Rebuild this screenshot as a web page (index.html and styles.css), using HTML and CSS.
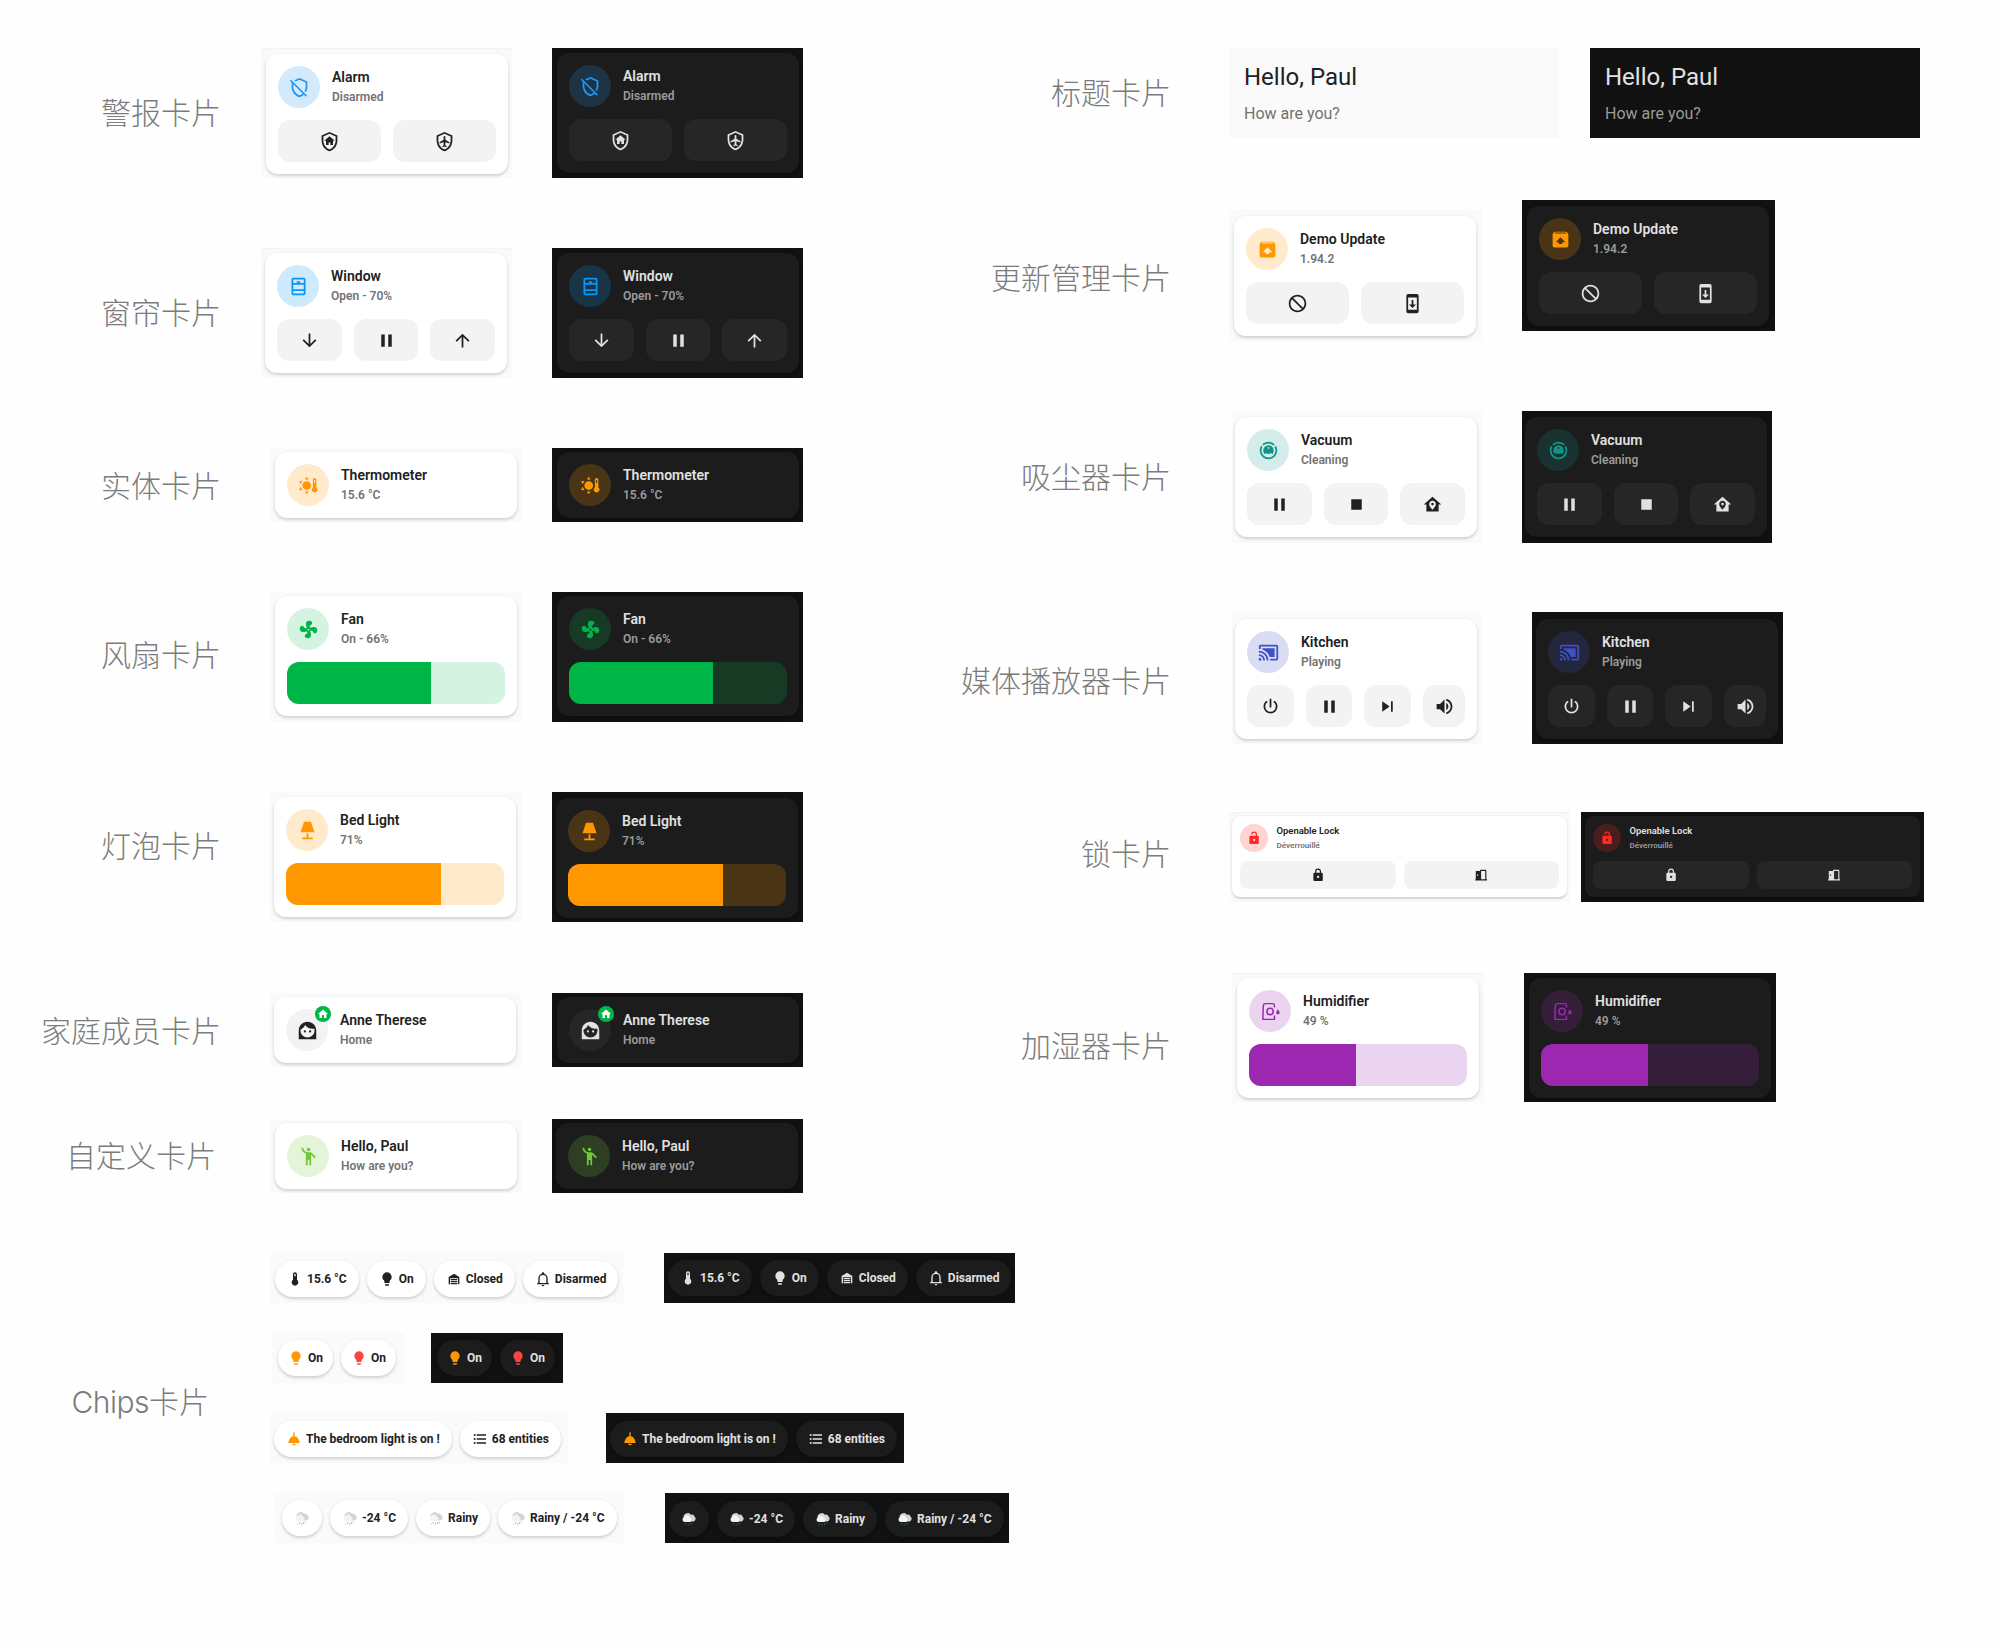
FILE: index.html
```html
<!DOCTYPE html>
<html lang="zh-CN">
<head>
<meta charset="utf-8">
<title>Mushroom Cards</title>
<link rel="stylesheet" href="styles.css">
</head>
<body>
<svg class="sprite" aria-hidden="true">
  <symbol id="shield-off" viewBox="0 0 24 24"><path d="M1,4.27L2.28,3L20.5,21.22L19.23,22.5L17,20.25C15.57,21.57 13.87,22.54 12,23C6.84,21.74 3,16.55 3,11V6.27L1,4.27M12,20.92C13.28,20.6 14.5,19.85 15.58,18.83L5,8.25V11.22C5,15.54 8.25,20 12,20.92M12,1L21,5V11C21,13.28 20.35,15.5 19.23,17.43L17.75,15.94C18.55,14.5 19,12.87 19,11.22V6.3L12,3.18L7.5,5.18L6,3.68L12,1Z"/></symbol>
  <symbol id="shield-home" viewBox="0 0 24 24"><path d="M11,13H13V16H16V11H18L12,6L6,11H8V16H11V13M12,1L21,5V11C21,16.55 17.16,21.74 12,23C6.84,21.74 3,16.55 3,11V5L12,1M12,3.18L5,6.3V11.22C5,15.54 8.25,20 12,21C15.75,20 19,15.54 19,11.22V6.3L12,3.18Z"/></symbol>
  <symbol id="shield-plane" viewBox="0 0 24 24"><path d="M12,1L21,5V11C21,16.55 17.16,21.74 12,23C6.84,21.74 3,16.55 3,11V5L12,1M12,3.18L5,6.3V11.22C5,15.54 8.25,20 12,21C15.75,20 19,15.54 19,11.22V6.3L12,3.18M12,5.7A1,1 0 0 0 11,6.7V10L6.3,12.8V14.2L11,12.8V16.3L9.6,17.4V18.5L12,17.8L14.4,18.5V17.4L13,16.3V12.8L17.7,14.2V12.8L13,10V6.7A1,1 0 0 0 12,5.7Z"/></symbol>
  <symbol id="window" viewBox="0 0 24 24"><path d="M6,8H10V6H14V8H18V4H6V8M18,10H6V15H18V10M6,20H18V17H6V20M6,2H18A2,2 0 0,1 20,4V20A2,2 0 0,1 18,22H6A2,2 0 0,1 4,20V4A2,2 0 0,1 6,2Z"/></symbol>
  <symbol id="down" viewBox="0 0 24 24"><path d="M11,4H13V16L18.5,10.5L19.92,11.92L12,19.84L4.08,11.92L5.5,10.5L11,16V4Z"/></symbol>
  <symbol id="up" viewBox="0 0 24 24"><path d="M13,20H11V8L5.5,13.5L4.08,12.08L12,4.16L19.92,12.08L18.5,13.5L13,8V20Z"/></symbol>
  <symbol id="pause" viewBox="0 0 24 24"><path d="M14,19H18V5H14M6,19H10V5H6V19Z"/></symbol>
  <symbol id="sun-thermo" viewBox="0 0 24 24"><circle cx="10" cy="12" r="5"/><path d="M10,2L12.2,5.2H7.8ZM10,22L7.8,18.8H12.2ZM1.3,7L5.2,6.7L3,10.6ZM1.3,17L3,13.4L5.2,17.3ZM17,5.5A2,2 0 0 1 21,5.5V14.2A3.2,3.2 0 1 1 17,14.2ZM18.4,6V9H19.6V6A.6,.6 0 0 0 18.4,6Z"/></symbol>
  <symbol id="fan" viewBox="0 0 24 24"><path d="M12,11A1,1 0 0,0 11,12A1,1 0 0,0 12,13A1,1 0 0,0 13,12A1,1 0 0,0 12,11M12.5,2C17,2 17.11,5.57 14.75,6.75C13.76,7.24 13.32,8.29 13.13,9.22C13.61,9.42 14.03,9.73 14.35,10.13C18.05,8.13 22.03,8.92 22.03,12.5C22.03,17 18.46,17.1 17.28,14.73C16.78,13.74 15.72,13.3 14.79,13.11C14.59,13.59 14.28,14 13.88,14.34C15.87,18.03 15.08,22 11.5,22C7,22 6.91,18.42 9.27,17.24C10.25,16.75 10.69,15.71 10.89,14.79C10.4,14.59 9.97,14.27 9.65,13.87C5.96,15.85 2,15.07 2,11.5C2,7 5.56,6.89 6.74,9.26C7.24,10.25 8.29,10.68 9.22,10.87C9.41,10.39 9.73,9.97 10.14,9.65C8.15,5.96 8.94,2 12.5,2Z"/></symbol>
  <symbol id="lamp" viewBox="0 0 24 24"><path d="M8,2H16L20,14H4L8,2M11,15H13V20H18V22H6V20H11V15Z"/></symbol>
  <symbol id="woman" viewBox="0 0 24 24"><path d="M13.75,13C13.75,12.31 14.31,11.75 15,11.75C15.69,11.75 16.25,12.31 16.25,13C16.25,13.69 15.69,14.25 15,14.25C14.31,14.25 13.75,13.69 13.75,13M22,12V22H2V12C2,6.5 6.5,2 12,2C17.5,2 22,6.5 22,12M4,12C4,16.41 7.59,20 12,20C16.41,20 20,16.41 20,12C20,11.21 19.88,10.45 19.67,9.74C18.95,9.91 18.2,10 17.42,10C14.05,10 11.07,8.33 9.26,5.77C8.28,8.16 6.41,10.09 4.05,11.14C4,11.42 4,11.71 4,12M9,11.75A1.25,1.25 0 0,0 7.75,13A1.25,1.25 0 0,0 9,14.25A1.25,1.25 0 0,0 10.25,13A1.25,1.25 0 0,0 9,11.75Z"/></symbol>
  <symbol id="home" viewBox="0 0 24 24"><path d="M10,20V14H14V20H19V12H22L12,3L2,12H5V20H10Z"/></symbol>
  <symbol id="greeting" viewBox="0 0 24 24"><circle cx="12" cy="4" r="2"/><path d="M15.9,8.1C15.5,7.7 14.8,7 13.5,7H11C8.2,7 6,4.8 6,2H4C4,5.2 6.1,7.8 9,8.7V22H11V16H13V22H15V10.1L19,14L20.4,12.6Z"/></symbol>
  <symbol id="thermometer" viewBox="0 0 24 24"><path d="M15,13V5A3,3 0 0,0 9,5V13A5,5 0 1,0 15,13M12,4A1,1 0 0,1 13,5V8H11V5A1,1 0 0,1 12,4Z"/></symbol>
  <symbol id="bulb" viewBox="0 0 24 24"><path d="M12,2A7,7 0 0,0 5,9C5,11.38 6.19,13.47 8,14.74V17A1,1 0 0,0 9,18H15A1,1 0 0,0 16,17V14.74C17.81,13.47 19,11.38 19,9A7,7 0 0,0 12,2M9,21A1,1 0 0,0 10,22H14A1,1 0 0,0 15,21V20H9V21Z"/></symbol>
  <symbol id="garage" viewBox="0 0 24 24"><path d="M20 9V20H18V11H6V20H4V9L12 4L20 9M17 12H7V14H17V12M17 18H7V20H17V18M17 15H7V17H17V15Z"/></symbol>
  <symbol id="bell" viewBox="0 0 24 24"><path d="M10,21H14A2,2 0 0,1 12,23A2,2 0 0,1 10,21M21,19V20H3V19L5,17V11C5,7.9 7.03,5.17 10,4.29C10,4.19 10,4.1 10,4A2,2 0 0,1 12,2A2,2 0 0,1 14,4C14,4.1 14,4.19 14,4.29C16.97,5.17 19,7.9 19,11V17L21,19M17,11A5,5 0 0,0 12,6A5,5 0 0,0 7,11V18H17V11Z"/></symbol>
  <symbol id="ceiling" viewBox="0 0 24 24"><path d="M11,2H13V8C17,8.4 19.6,12 20.6,18H3.4C4.4,12 7,8.4 11,8ZM9.3,19H14.7A2.7,2.3 0 0 1 9.3,19Z"/></symbol>
  <symbol id="list" viewBox="0 0 24 24"><path d="M7,5H21V7H7V5M7,13V11H21V13H7M4,4.5A1.5,1.5 0 0,1 5.5,6A1.5,1.5 0 0,1 4,7.5A1.5,1.5 0 0,1 2.5,6A1.5,1.5 0 0,1 4,4.5M4,10.5A1.5,1.5 0 0,1 5.5,12A1.5,1.5 0 0,1 4,13.5A1.5,1.5 0 0,1 2.5,12A1.5,1.5 0 0,1 4,10.5M7,19V17H21V19H7M4,16.5A1.5,1.5 0 0,1 5.5,18A1.5,1.5 0 0,1 4,19.5A1.5,1.5 0 0,1 2.5,18A1.5,1.5 0 0,1 4,16.5Z"/></symbol>
  <symbol id="rainy" viewBox="0 0 24 24"><path fill="#d4d4d4" d="M9,3.2A4.6,4.6 0 0 1 14.6,5.6A4.6,4.6 0 0 1 20.4,8.2A4.4,4.4 0 0 1 18.6,15.8H9L3.6,9.6A5,5 0 0 1 5,5.8A4.6,4.6 0 0 1 9,3.200Z"/><path class="cloud-front" d="M5.6,16.600A3.700,3.700 0 0 1 4.800,9.400A4.600,4.600 0 0 1 13.300,10A3.500,3.500 0 0 1 13.600,16.600Z"/><path class="rain" d="M7,18.400h1.500v1.500H7ZM10.300,20.300h1.500v1.600h-1.500ZM13.500,18.400h1.200v2.600H13.500ZM16.400,18h1.200v1.500h-1.200ZM5,20.500h1.200v1.200H5Z"/></symbol>
  <symbol id="package-up" viewBox="0 0 24 24"><path d="M20.54,5.23L19.15,3.55C18.88,3.21 18.47,3 18,3H6C5.53,3 5.12,3.21 4.84,3.55L3.46,5.23C3.17,5.57 3,6 3,6.5V19A2,2 0 0,0 5,21H19A2,2 0 0,0 21,19V6.5C21,6 20.83,5.57 20.54,5.23M12,9.5L17.5,15H14V17H10V15H6.5L12,9.5M5.12,5L5.93,4H17.93L18.87,5H5.12Z"/></symbol>
  <symbol id="cancel" viewBox="0 0 24 24"><path d="M12 2C17.5 2 22 6.5 22 12S17.5 22 12 22 2 17.5 2 12 6.5 2 12 2M12 4C10.1 4 8.4 4.6 7.1 5.7L18.3 16.9C19.3 15.5 20 13.8 20 12C20 7.6 16.4 4 12 4M16.9 18.3L5.7 7.1C4.6 8.4 4 10.1 4 12C4 16.4 7.6 20 12 20C13.9 20 15.6 19.4 16.9 18.3Z"/></symbol>
  <symbol id="phone-down" viewBox="0 0 24 24"><path d="M17,1H7A2,2 0 0,0 5,3V21A2,2 0 0,0 7,23H17A2,2 0 0,0 19,21V3A2,2 0 0,0 17,1M17,19H7V5H17V19M16,13H13V8H11V13H8L12,17L16,13Z"/></symbol>
  <symbol id="vacuum" viewBox="0 0 24 24"><path d="M12,2C14.65,2 17.19,3.06 19.07,4.93L17.65,6.35C16.15,4.85 14.12,4 12,4C9.88,4 7.84,4.84 6.35,6.35L4.93,4.93C6.81,3.06 9.35,2 12,2M3.66,6.5L5.11,7.94C4.39,9.17 4,10.57 4,12A8,8 0 0,0 12,20A8,8 0 0,0 20,12C20,10.57 19.61,9.17 18.88,7.94L20.34,6.5C21.42,8.12 22,10.04 22,12A10,10 0 0,1 12,22A10,10 0 0,1 2,12C2,10.04 2.58,8.12 3.66,6.5M12,6A6,6 0 0,1 18,12C18,13.59 17.37,15.12 16.24,16.24L14.83,14.83C14.08,15.58 13.06,16 12,16C10.94,16 9.92,15.58 9.17,14.83L7.76,16.24C6.63,15.12 6,13.59 6,12A6,6 0 0,1 12,6M12,8A1,1 0 0,0 11,9A1,1 0 0,0 12,10A1,1 0 0,0 13,9A1,1 0 0,0 12,8Z"/></symbol>
  <symbol id="stop" viewBox="0 0 24 24"><path d="M18,18H6V6H18V18Z"/></symbol>
  <symbol id="home-marker" viewBox="0 0 24 24"><path d="M12,3L2,12H5V20H19V12H22L12,3M12,7.7C14.1,7.7 15.8,9.4 15.8,11.5C15.8,14.5 12,18 12,18C12,18 8.2,14.5 8.2,11.5C8.2,9.4 9.9,7.7 12,7.7M12,10A1.5,1.5 0 0,0 10.5,11.5A1.5,1.5 0 0,0 12,13A1.5,1.5 0 0,0 13.5,11.5A1.5,1.5 0 0,0 12,10Z"/></symbol>
  <symbol id="cast" viewBox="0 0 24 24"><path d="M21,3H3C1.89,3 1,3.89 1,5V8H3V5H21V19H14V21H21A2,2 0 0,0 23,19V5C23,3.89 22.1,3 21,3M1,10V12A9,9 0 0,1 10,21H12C12,14.92 7.07,10 1,10M19,7H5V8.63C8.96,9.91 12.09,13.04 13.37,17H19M1,14V16A5,5 0 0,1 6,21H8A7,7 0 0,0 1,14M1,18V21H4A3,3 0 0,0 1,18Z"/></symbol>
  <symbol id="power" viewBox="0 0 24 24"><path d="M16.56,5.44L15.11,6.89C16.84,7.94 18,9.83 18,12A6,6 0 0,1 12,18A6,6 0 0,1 6,12C6,9.83 7.16,7.94 8.88,6.88L7.44,5.44C5.36,6.88 4,9.28 4,12A8,8 0 0,0 12,20A8,8 0 0,0 20,12C20,9.28 18.64,6.88 16.56,5.44M13,3H11V13H13"/></symbol>
  <symbol id="next" viewBox="0 0 24 24"><path d="M16,18H18V6H16M6,18L14.5,12L6,6V18Z"/></symbol>
  <symbol id="volume" viewBox="0 0 24 24"><path d="M14,3.23V5.29C16.89,6.15 19,8.83 19,12C19,15.17 16.89,17.84 14,18.7V20.77C18,19.86 21,16.28 21,12C21,7.72 18,4.14 14,3.23M16.5,12C16.5,10.23 15.5,8.71 14,7.97V16C15.5,15.29 16.5,13.76 16.5,12M3,9V15H7L12,20V4L7,9H3Z"/></symbol>
  <symbol id="lock-open" viewBox="0 0 24 24"><path d="M18,8A2,2 0 0,1 20,10V20A2,2 0 0,1 18,22H6C4.89,22 4,21.1 4,20V10A2,2 0 0,1 6,8H15V6A3,3 0 0,0 12,3A3,3 0 0,0 9,6H7A5,5 0 0,1 12,1A5,5 0 0,1 17,6V8H18M12,17A2,2 0 0,0 14,15A2,2 0 0,0 12,13A2,2 0 0,0 10,15A2,2 0 0,0 12,17Z"/></symbol>
  <symbol id="lock" viewBox="0 0 24 24"><path d="M12,17A2,2 0 0,0 14,15C14,13.89 13.1,13 12,13A2,2 0 0,0 10,15A2,2 0 0,0 12,17M18,8A2,2 0 0,1 20,10V20A2,2 0 0,1 18,22H6A2,2 0 0,1 4,20V10C4,8.89 4.9,8 6,8H7V6A5,5 0 0,1 12,1A5,5 0 0,1 17,6V8H18M12,3A3,3 0 0,0 9,6V8H15V6A3,3 0 0,0 12,3Z"/></symbol>
  <symbol id="door-open" viewBox="0 0 24 24"><path d="M12,3C10.89,3 10,3.89 10,5H3V19H2V21H22V19H21V5C21,3.89 20.1,3 19,3H12M12,5H19V19H12V5M5,11H7V13H5V11Z"/></symbol>
  <symbol id="humidifier" viewBox="0 0 24 24"><path fill="none" stroke="currentColor" stroke-width="1.7" d="M16.500,7.500V5A2,2 0 0 0 14.500,3H5.500A1.500,1.500 0 0 0 4.100,4.200C3.500,8 3.400,14 3.400,21H16.500V16.500"/><circle cx="11.500" cy="12" r="3.600" fill="none" stroke="currentColor" stroke-width="1.700"/><path d="M20.500,9.500C21.500,11 22.500,12.300 22.500,13.400A2,2 0 0 1 18.500,13.400C18.500,12.300 19.500,11 20.500,9.500Z"/></symbol>
</svg>

<main>
  <div class="columns">
    <div class="column">
      <section class="row alarm">
        <h2>警报卡片</h2>
        <div class="frame light trim"><div class="card">
          <div class="head"><span class="shape blue"><svg><use href="#shield-off"/></svg></span><div class="info"><b>Alarm</b><span>Disarmed</span></div></div>
          <div class="actions"><button><svg><use href="#shield-home"/></svg></button><button><svg><use href="#shield-plane"/></svg></button></div>
        </div></div>
        <div class="frame dark"><div class="card">
          <div class="head"><span class="shape blue"><svg><use href="#shield-off"/></svg></span><div class="info"><b>Alarm</b><span>Disarmed</span></div></div>
          <div class="actions"><button><svg><use href="#shield-home"/></svg></button><button><svg><use href="#shield-plane"/></svg></button></div>
        </div></div>
      </section>

      <section class="row cover">
        <h2>窗帘卡片</h2>
        <div class="frame light trim"><div class="card">
          <div class="head"><span class="shape sky"><svg><use href="#window"/></svg></span><div class="info"><b>Window</b><span>Open - 70%</span></div></div>
          <div class="actions"><button><svg><use href="#down"/></svg></button><button><svg><use href="#pause"/></svg></button><button><svg><use href="#up"/></svg></button></div>
        </div></div>
        <div class="frame dark"><div class="card">
          <div class="head"><span class="shape sky"><svg><use href="#window"/></svg></span><div class="info"><b>Window</b><span>Open - 70%</span></div></div>
          <div class="actions"><button><svg><use href="#down"/></svg></button><button><svg><use href="#pause"/></svg></button><button><svg><use href="#up"/></svg></button></div>
        </div></div>
      </section>

      <section class="row entity">
        <h2>实体卡片</h2>
        <div class="frame light"><div class="card">
          <div class="head"><span class="shape orange"><svg><use href="#sun-thermo"/></svg></span><div class="info"><b>Thermometer</b><span>15.6 °C</span></div></div>
        </div></div>
        <div class="frame dark"><div class="card">
          <div class="head"><span class="shape orange"><svg><use href="#sun-thermo"/></svg></span><div class="info"><b>Thermometer</b><span>15.6 °C</span></div></div>
        </div></div>
      </section>

      <section class="row fan">
        <h2>风扇卡片</h2>
        <div class="frame light"><div class="card">
          <div class="head"><span class="shape green"><svg><use href="#fan"/></svg></span><div class="info"><b>Fan</b><span>On - 66%</span></div></div>
          <div class="slider green"><div class="fill" style="width:66%"></div></div>
        </div></div>
        <div class="frame dark"><div class="card">
          <div class="head"><span class="shape green"><svg><use href="#fan"/></svg></span><div class="info"><b>Fan</b><span>On - 66%</span></div></div>
          <div class="slider green"><div class="fill" style="width:66%"></div></div>
        </div></div>
      </section>

      <section class="row bed">
        <h2>灯泡卡片</h2>
        <div class="frame light"><div class="card">
          <div class="head"><span class="shape orange"><svg><use href="#lamp"/></svg></span><div class="info"><b>Bed Light</b><span>71%</span></div></div>
          <div class="slider orange"><div class="fill" style="width:71%"></div></div>
        </div></div>
        <div class="frame dark"><div class="card">
          <div class="head"><span class="shape orange"><svg><use href="#lamp"/></svg></span><div class="info"><b>Bed Light</b><span>71%</span></div></div>
          <div class="slider orange"><div class="fill" style="width:71%"></div></div>
        </div></div>
      </section>

      <section class="row person">
        <h2>家庭成员卡片</h2>
        <div class="frame light"><div class="card">
          <div class="head"><span class="shape neutral"><svg><use href="#woman"/></svg><i class="badge"><svg><use href="#home"/></svg></i></span><div class="info"><b>Anne Therese</b><span>Home</span></div></div>
        </div></div>
        <div class="frame dark"><div class="card">
          <div class="head"><span class="shape neutral"><svg><use href="#woman"/></svg><i class="badge"><svg><use href="#home"/></svg></i></span><div class="info"><b>Anne Therese</b><span>Home</span></div></div>
        </div></div>
      </section>

      <section class="row template">
        <h2>自定义卡片</h2>
        <div class="frame light"><div class="card">
          <div class="head"><span class="shape lime"><svg><use href="#greeting"/></svg></span><div class="info"><b>Hello, Paul</b><span>How are you?</span></div></div>
        </div></div>
        <div class="frame dark"><div class="card">
          <div class="head"><span class="shape lime"><svg><use href="#greeting"/></svg></span><div class="info"><b>Hello, Paul</b><span>How are you?</span></div></div>
        </div></div>
      </section>
    </div>

    <div class="column">
      <section class="row title">
        <h2>标题卡片</h2>
        <div class="frame light"><h3>Hello, Paul</h3><p>How are you?</p></div>
        <div class="frame dark"><h3>Hello, Paul</h3><p>How are you?</p></div>
      </section>

      <section class="row update">
        <h2>更新管理卡片</h2>
        <div class="frame light"><div class="card">
          <div class="head"><span class="shape orange"><svg><use href="#package-up"/></svg></span><div class="info"><b>Demo Update</b><span>1.94.2</span></div></div>
          <div class="actions"><button><svg><use href="#cancel"/></svg></button><button><svg><use href="#phone-down"/></svg></button></div>
        </div></div>
        <div class="frame dark"><div class="card">
          <div class="head"><span class="shape orange"><svg><use href="#package-up"/></svg></span><div class="info"><b>Demo Update</b><span>1.94.2</span></div></div>
          <div class="actions"><button><svg><use href="#cancel"/></svg></button><button><svg><use href="#phone-down"/></svg></button></div>
        </div></div>
      </section>

      <section class="row vacuum">
        <h2>吸尘器卡片</h2>
        <div class="frame light"><div class="card">
          <div class="head"><span class="shape teal"><svg><use href="#vacuum"/></svg></span><div class="info"><b>Vacuum</b><span>Cleaning</span></div></div>
          <div class="actions"><button><svg><use href="#pause"/></svg></button><button><svg><use href="#stop"/></svg></button><button><svg><use href="#home-marker"/></svg></button></div>
        </div></div>
        <div class="frame dark"><div class="card">
          <div class="head"><span class="shape teal"><svg><use href="#vacuum"/></svg></span><div class="info"><b>Vacuum</b><span>Cleaning</span></div></div>
          <div class="actions"><button><svg><use href="#pause"/></svg></button><button><svg><use href="#stop"/></svg></button><button><svg><use href="#home-marker"/></svg></button></div>
        </div></div>
      </section>

      <section class="row media">
        <h2>媒体播放器卡片</h2>
        <div class="frame light"><div class="card">
          <div class="head"><span class="shape indigo"><svg><use href="#cast"/></svg></span><div class="info"><b>Kitchen</b><span>Playing</span></div></div>
          <div class="actions"><button><svg><use href="#power"/></svg></button><button><svg><use href="#pause"/></svg></button><button><svg><use href="#next"/></svg></button><button class="square"><svg><use href="#volume"/></svg></button></div>
        </div></div>
        <div class="frame dark"><div class="card">
          <div class="head"><span class="shape indigo"><svg><use href="#cast"/></svg></span><div class="info"><b>Kitchen</b><span>Playing</span></div></div>
          <div class="actions"><button><svg><use href="#power"/></svg></button><button><svg><use href="#pause"/></svg></button><button><svg><use href="#next"/></svg></button><button class="square"><svg><use href="#volume"/></svg></button></div>
        </div></div>
      </section>

      <section class="row locks">
        <h2>锁卡片</h2>
        <div class="frame light trim"><div class="card">
          <div class="head"><span class="shape red"><svg><use href="#lock-open"/></svg></span><div class="info"><b>Openable Lock</b><span>Déverrouillé</span></div></div>
          <div class="actions"><button><svg><use href="#lock"/></svg></button><button><svg><use href="#door-open"/></svg></button></div>
        </div></div>
        <div class="frame dark"><div class="card">
          <div class="head"><span class="shape red"><svg><use href="#lock-open"/></svg></span><div class="info"><b>Openable Lock</b><span>Déverrouillé</span></div></div>
          <div class="actions"><button><svg><use href="#lock"/></svg></button><button><svg><use href="#door-open"/></svg></button></div>
        </div></div>
      </section>

      <section class="row humid">
        <h2>加湿器卡片</h2>
        <div class="frame light trim"><div class="card">
          <div class="head"><span class="shape purple"><svg><use href="#humidifier"/></svg></span><div class="info"><b>Humidifier</b><span>49 %</span></div></div>
          <div class="slider purple"><div class="fill" style="width:49%"></div></div>
        </div></div>
        <div class="frame dark"><div class="card">
          <div class="head"><span class="shape purple"><svg><use href="#humidifier"/></svg></span><div class="info"><b>Humidifier</b><span>49 %</span></div></div>
          <div class="slider purple"><div class="fill" style="width:49%"></div></div>
        </div></div>
      </section>
    </div>
  </div>

  <section class="chips">
    <h2><span class="latin">Chips</span>卡片</h2>
    <div class="chip-rows">
      <div class="chip-row states">
        <div class="frame light"><span class="chip"><svg><use href="#thermometer"/></svg>15.6 °C</span><span class="chip"><svg><use href="#bulb"/></svg>On</span><span class="chip"><svg><use href="#garage"/></svg>Closed</span><span class="chip"><svg><use href="#bell"/></svg>Disarmed</span></div>
        <div class="frame dark"><span class="chip"><svg><use href="#thermometer"/></svg>15.6 °C</span><span class="chip"><svg><use href="#bulb"/></svg>On</span><span class="chip"><svg><use href="#garage"/></svg>Closed</span><span class="chip"><svg><use href="#bell"/></svg>Disarmed</span></div>
      </div>
      <div class="chip-row lights">
        <div class="frame light"><span class="chip"><svg class="orange"><use href="#bulb"/></svg>On</span><span class="chip"><svg class="coral"><use href="#bulb"/></svg>On</span></div>
        <div class="frame dark"><span class="chip"><svg class="orange"><use href="#bulb"/></svg>On</span><span class="chip"><svg class="coral"><use href="#bulb"/></svg>On</span></div>
      </div>
      <div class="chip-row templates">
        <div class="frame light"><span class="chip"><svg class="orange"><use href="#ceiling"/></svg>The bedroom light is on !</span><span class="chip"><svg><use href="#list"/></svg>68 entities</span></div>
        <div class="frame dark"><span class="chip"><svg class="orange"><use href="#ceiling"/></svg>The bedroom light is on !</span><span class="chip"><svg><use href="#list"/></svg>68 entities</span></div>
      </div>
      <div class="chip-row weather">
        <div class="frame light"><span class="chip"><svg><use href="#rainy"/></svg></span><span class="chip"><svg><use href="#rainy"/></svg>-24 °C</span><span class="chip"><svg><use href="#rainy"/></svg>Rainy</span><span class="chip"><svg><use href="#rainy"/></svg>Rainy / -24 °C</span></div>
        <div class="frame dark"><span class="chip"><svg><use href="#rainy"/></svg></span><span class="chip"><svg><use href="#rainy"/></svg>-24 °C</span><span class="chip"><svg><use href="#rainy"/></svg>Rainy</span><span class="chip"><svg><use href="#rainy"/></svg>Rainy / -24 °C</span></div>
      </div>
    </div>
  </section>
</main>
</body>
</html>
```
FILE: styles.css
```css
* { box-sizing: border-box; }
body {
  margin: 0;
  background: #fefefe;
  font-family: Roboto, "Liberation Sans", sans-serif;
}
.sprite { display: none; }
main { width: 2000px; height: 1649px; overflow: hidden; }
svg { display: block; fill: currentColor; flex: none; }

h2 {
  margin: 0;
  flex: none;
  font: 200 30px/40px Inter, "Noto Sans CJK SC", sans-serif;
  color: #7c7c7c;
  text-align: right;
  white-space: nowrap;
}
.latin { font-weight: 300; letter-spacing: -.5px; }

/* gallery layout */
.columns { display: flex; padding-top: 48px; height: 1193px; }
.column { flex: none; width: 940px; display: flex; flex-direction: column; }
.row { display: flex; align-items: flex-start; }
.row h2 { width: 221px; align-self: center; }
.column + .column h2 { width: 231px; }

/* frames and themes */
.frame {
  flex: none;
  width: 251px;
  height: 130px;
  padding: 5px 0 0 5px;
  background: var(--page);
  color: var(--text);
}
.light {
  --page: #fafafa; --card: #fff; --text: #212121; --muted: #727272; --control: #f3f3f3; --tint: 20%;
  --rain: #30b3ff;
  --shadow: 0 2px 3px rgba(0,0,0,.12), 0 1px 4px rgba(0,0,0,.07);
}
.dark {
  --page: #111; --card: #1c1c1c; --text: #e1e1e1; --muted: #9b9b9b; --control: #262626; --tint: 20%;
  --rain: #1f6d99;
  --shadow: 0 2px 2px rgba(0,0,0,.14), 0 1px 5px rgba(0,0,0,.12);
}
.trim { box-shadow: inset 0 2px 2px -1px rgba(0,0,0,.035); }

/* cards */
.card {
  width: 242px;
  padding: 12px;
  display: flex;
  flex-direction: column;
  gap: 12px;
  border-radius: 12px;
  background: var(--card);
  box-shadow: var(--shadow);
}
.head { display: flex; gap: 12px; align-items: center; height: 42px; }
.shape {
  position: relative;
  width: 42px;
  height: 42px;
  border-radius: 50%;
  display: grid;
  place-items: center;
  color: var(--accent);
  background: color-mix(in srgb, var(--accent) var(--tint), transparent);
}
.shape svg, .actions svg { width: 21px; height: 21px; }
.neutral { color: var(--text); background: var(--control); }
.badge {
  position: absolute;
  top: -3px;
  right: -3px;
  width: 16px;
  height: 16px;
  border-radius: 50%;
  display: grid;
  place-items: center;
  background: #00b548;
  color: #fff;
}
.badge svg { width: 12px; height: 12px; }
.info { display: flex; flex-direction: column; gap: 1px; white-space: nowrap; }
.info b { font-size: 14px; line-height: 19px; font-weight: 600; }
.info span { font-size: 12px; line-height: 18px; font-weight: 600; color: var(--muted); }
.info { padding-bottom: 1px; }
.actions { display: flex; gap: 12px; }
.actions button {
  flex: 1 1 0;
  height: 42px;
  padding: 0;
  border: 0;
  border-radius: 12px;
  display: grid;
  place-items: center;
  background: var(--control);
  color: var(--text);
}
.actions .square { flex: none; width: 42px; }
.slider {
  height: 42px;
  border-radius: 12px;
  overflow: hidden;
  background: color-mix(in srgb, var(--accent) var(--tint), transparent);
}
.fill { height: 100%; background: var(--accent); }

.blue { --accent: #2196f3; }
.sky { --accent: #0a95f7; }
.orange { --accent: #ff9800; }
.green { --accent: #00b548; --tint: 17%; }
.dark .green { --tint: 20%; }
.lime { --accent: #72c73a; }
.teal { --accent: #0f9688; --tint: 18%; }
.indigo { --accent: #3f51c5; }
.red { --accent: #ff2a24; }
.purple { --accent: #9c27b0; }

/* row placement */
.alarm .light, .cover .light { margin-left: 40px; }
.alarm .dark, .cover .dark { margin-left: 40px; }
.alarm .light { padding-top: 6px; }
.cover { margin-top: 70px; }
.cover .light { padding-left: 4px; }
.entity .light, .fan .light, .bed .light, .person .light, .template .light { margin-left: 49px; }
.entity .dark, .fan .dark, .bed .dark, .person .dark, .template .dark { margin-left: 31px; }
.entity .frame, .person .frame, .template .frame { height: 74px; padding-top: 4px; }
.entity { margin-top: 70px; }
.entity h2, .person h2 { margin-top: 2px; }
.fan { margin-top: 70px; }
.fan .frame { padding-top: 4px; }
.fan h2 { margin-top: -4px; }
.bed { margin-top: 70px; }
.bed .frame { padding-left: 4px; }
.bed .dark { padding-top: 6px; }
.bed h2 { margin-top: -22px; }
.person { margin-top: 71px; }
.person .light { padding-left: 4px; }
.template { margin-top: 52px; }
.template .dark { padding-left: 4px; }
.row.template h2 { width: 216px; margin-right: 5px; }

.title .frame { width: 330px; height: 90px; padding: 13px 15px 0; }
.title .light { margin-left: 58px; }
.title .dark { margin-left: 31px; }
.title h3 { margin: 0; font-size: 24px; line-height: 33px; font-weight: 400; }
.title p { margin: 8px 0 0; font-size: 16px; line-height: 24px; color: var(--muted); }
.update { margin-top: 62px; }
.update .frame { width: 253px; height: 131px; padding-top: 6px; }
.update .light { margin: 10px 0 0 58px; }
.update .dark { margin-left: 40px; }
.update h2 { margin-top: 15px; }
.vacuum { margin-top: 70px; }
.vacuum .frame { width: 250px; height: 132px; padding: 6px 0 0 3px; }
.vacuum .light { margin-left: 61px; }
.vacuum .dark { margin-left: 40px; }
.media { margin-top: 69px; }
.media .frame { height: 132px; padding: 7px 0 0 4px; }
.media .light { width: 250px; padding-left: 3px; margin-left: 61px; }
.media .dark { margin-left: 50px; }
.media h2 { margin-top: 6px; }
.locks { margin-top: 68px; }
.locks .frame { width: 341px; height: 90px; padding: 4px 0 0 3px; }
.locks .light { margin-left: 58px; }
.locks .dark { width: 343px; padding-left: 4px; margin-left: 11px; }
.locks .card { zoom: .675; width: 497px; }
.locks h2 { margin-top: -7px; }
.humid { margin-top: 71px; }
.humid .frame { width: 252px; height: 129px; }
.humid .light { margin-left: 61px; }
.humid .dark { margin-left: 40px; }
.humid h2 { margin-top: 16px; }

/* chips */
.chips { display: flex; align-items: flex-start; padding-top: 60px; }
.chips h2 { width: 209px; margin-top: 129px; }
.chip-rows { display: flex; flex-direction: column; gap: 30px; margin-left: 61px; }
.chip-row { display: flex; }
.chip-row .frame { display: flex; align-items: flex-start; gap: 8px; height: 50px; }
.chip {
  display: flex;
  align-items: center;
  gap: 4px;
  height: 36px;
  padding: 0 12px;
  border-radius: 18px;
  background: var(--card);
  box-shadow: var(--shadow);
  font-size: 12px;
  font-weight: 700;
  white-space: nowrap;
}
.chip svg { width: 16px; height: 16px; }
.chip .orange { color: #ff9800; }
.chip .coral { color: #ff4440; }
.states .light { width: 354px; padding: 8px 0 0 5px; }
.states .dark { width: 351px; padding: 7px 0 0 4px; margin-left: 40px; }
.lights .light { width: 132px; padding: 7px 0 0 6px; margin-left: 2px; }
.lights .dark { width: 132px; padding: 7px 0 0 6px; margin-left: 27px; }
.lights .chip { padding: 0 10px; }
.templates .light { width: 298px; padding: 8px 0 0 4px; }
.templates .dark { width: 298px; padding: 8px 0 0 4px; margin-left: 38px; }
.weather .light { width: 349px; padding: 7px 0 0 7px; margin-left: 5px; }
.weather .dark { width: 344px; padding: 8px 0 0 4px; margin-left: 41px; }
.cloud-front { fill: #f4f4f4; }
.rain { fill: var(--rain); }
```
